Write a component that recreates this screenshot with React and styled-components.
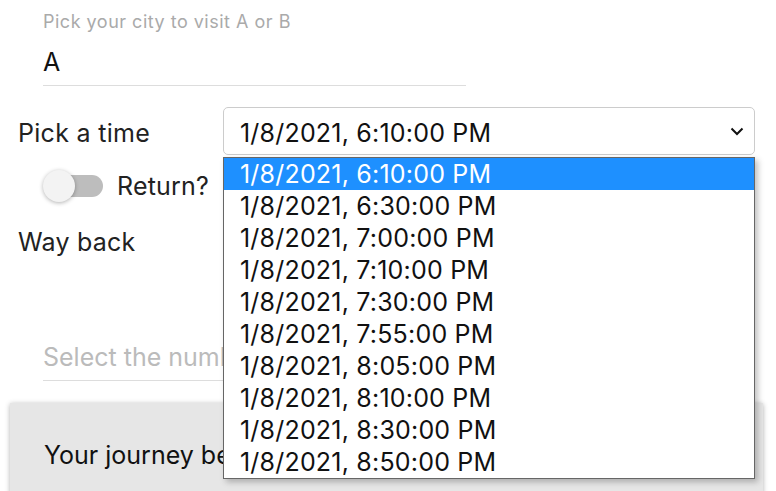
import React, { useState } from 'react'
import styled, { createGlobalStyle } from 'styled-components'

const GlobalStyle = createGlobalStyle`
  html, body {
    margin: 0;
    padding: 0;
    background: #fff;
    overflow: hidden;
  }
  body {
    font-family: Inter, "Open Sans", sans-serif;
    color: #222;
  }
`

const times = [
  '6:10:00 PM',
  '6:30:00 PM',
  '7:00:00 PM',
  '7:10:00 PM',
  '7:30:00 PM',
  '7:55:00 PM',
  '8:05:00 PM',
  '8:10:00 PM',
  '8:30:00 PM',
  '8:50:00 PM',
].map((t) => '1/8/2021, ' + t)

function App() {
  const [selected, setSelected] = useState(0)

  return (
    <Page>
      <GlobalStyle />

      <Field>
        <FieldLabel>Pick your city to visit A or B</FieldLabel>
        <FieldValue>A</FieldValue>
      </Field>

      <TimeRow>
        <RowLabel>Pick a time</RowLabel>
        <SelectWrap>
          <SelectBox>
            <span>{times[selected]}</span>
            <svg width="14" height="9" viewBox="0 0 14 9">
              <path d="M1.5 1.5 L7 7 L12.5 1.5" fill="none" stroke="#111" strokeWidth="2" />
            </svg>
          </SelectBox>
          <OptionList>
            {times.map((t, i) => (
              <Option key={t} active={i === selected} onClick={() => setSelected(i)}>
                {t}
              </Option>
            ))}
          </OptionList>
        </SelectWrap>
      </TimeRow>

      <SwitchRow>
        <Switch>
          <Track />
          <Thumb />
        </Switch>
        <SwitchLabel>Return?</SwitchLabel>
      </SwitchRow>

      <BackLabel>Way back</BackLabel>

      <Field>
        <Placeholder>Select the number of tickets</Placeholder>
      </Field>

      <Summary>
        <SummaryText>Your journey begins here</SummaryText>
      </Summary>
    </Page>
  )
}

const Page = styled.div`
  width: 776px;
  height: 491px;
  overflow: hidden;
  padding-top: 10px;
  box-sizing: border-box;
`

const Field = styled.div`
  margin-left: 43px;
  width: 423px;
  border-bottom: 1px solid #ddd;
  display: flex;
  flex-direction: column;
`

const FieldLabel = styled.label`
  font-size: 18px;
  color: #aaa;
  line-height: 24px;
  letter-spacing: 0.5px;
`

const FieldValue = styled.div`
  font-size: 25px;
  color: #111;
  line-height: 30px;
  padding: 13px 0 8px;
`

const TimeRow = styled.div`
  display: flex;
  align-items: center;
  margin-top: 21px;
  padding-left: 18px;
`

const RowLabel = styled.span`
  font-size: 25px;
  letter-spacing: 0.3px;
  color: #222;
  width: 205px;
  line-height: 30px;
  padding-top: 3px;
  display: block;
`

const BackLabel = styled.div`
  font-size: 25px;
  letter-spacing: 0.2px;
  color: #222;
  line-height: 30px;
  padding-left: 18px;
  margin-top: 25px;
`

const SelectWrap = styled.div`
  position: relative;
  width: 532px;
`

const SelectBox = styled.div`
  height: 48px;
  box-sizing: border-box;
  border: 1px solid #ccc;
  border-radius: 5px;
  display: flex;
  align-items: center;
  justify-content: space-between;
  padding: 4px 10px 0 16px;
  font-size: 25px;
  letter-spacing: 0.2px;
  color: #111;

  svg {
    margin-top: -4px;
  }
`

const OptionList = styled.div`
  position: absolute;
  top: 50px;
  left: 0;
  width: 532px;
  box-sizing: border-box;
  background: #fff;
  border: 1px solid #666;
  box-shadow: 3px 3px 6px rgba(0, 0, 0, 0.25);
  z-index: 10;
`

const Option = styled.div`
  height: 32px;
  line-height: 32px;
  padding-left: 16px;
  font-size: 25px;
  letter-spacing: 0.2px;
  color: ${(p) => (p.active ? '#fff' : '#111')};
  background: ${(p) => (p.active ? '#1e90ff' : '#fff')};
`

const SwitchRow = styled.div`
  display: flex;
  align-items: center;
  gap: 14px;
  margin-top: 15px;
  padding-left: 43px;
`

const Switch = styled.div`
  position: relative;
  width: 60px;
  height: 32px;
  display: flex;
  align-items: center;
`

const Track = styled.div`
  margin-left: 15px;
  width: 45px;
  height: 22px;
  border-radius: 11px;
  background: #bdbdbd;
`

const Thumb = styled.div`
  position: absolute;
  left: 0;
  top: 0;
  width: 32px;
  height: 32px;
  border-radius: 50%;
  background: #f3f3f3;
  box-shadow: 0 1px 4px rgba(0, 0, 0, 0.3);
`

const SwitchLabel = styled.span`
  font-size: 25px;
  letter-spacing: 0.2px;
  color: #222;
`

const Placeholder = styled.div`
  font-size: 25px;
  color: #bbb;
  line-height: 30px;
  margin-top: 85px;
  padding-bottom: 8px;
  white-space: nowrap;
  overflow: hidden;
`

const Summary = styled.div`
  margin: 22px 0 0 10px;
  width: 753px;
  height: 120px;
  background: #e6e6e6;
  box-shadow: 0 1px 5px rgba(0, 0, 0, 0.3);
  padding: 37px 0 0 34px;
  box-sizing: border-box;
`

const SummaryText = styled.div`
  font-size: 25px;
  line-height: 30px;
  color: #111;
`

export default App
